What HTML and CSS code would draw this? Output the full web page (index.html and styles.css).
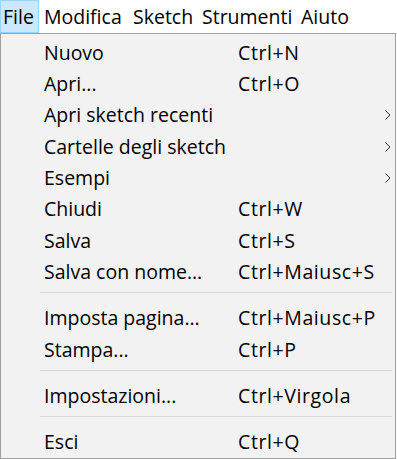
FILE: index.html
```html
<!DOCTYPE html>
<html>
<head>
<meta charset="utf-8">
<link rel="stylesheet" href="styles.css">
</head>
<body>
<div class="menubar">
  <span class="mb-item mb-file active">File</span>
  <span class="mb-item mb-edit">Modifica</span>
  <span class="mb-item mb-sketch">Sketch</span>
  <span class="mb-item mb-tools">Strumenti</span>
  <span class="mb-item mb-help">Aiuto</span>
</div>
<div class="menu">
  <div class="item"><span class="label">Nuovo</span><span class="key">Ctrl+N</span></div>
  <div class="item"><span class="label">Apri...</span><span class="key">Ctrl+O</span></div>
  <div class="item"><span class="label">Apri sketch recenti</span><span class="key"></span><svg class="arrow" width="6" height="10" viewBox="0 0 6 10"><path d="M0.5 0.5 L5 5 L0.5 9.5" fill="none" stroke="#333" stroke-width="1"/></svg></div>
  <div class="item"><span class="label">Cartelle degli sketch</span><span class="key"></span><svg class="arrow" width="6" height="10" viewBox="0 0 6 10"><path d="M0.5 0.5 L5 5 L0.5 9.5" fill="none" stroke="#333" stroke-width="1"/></svg></div>
  <div class="item"><span class="label">Esempi</span><span class="key"></span><svg class="arrow" width="6" height="10" viewBox="0 0 6 10"><path d="M0.5 0.5 L5 5 L0.5 9.5" fill="none" stroke="#333" stroke-width="1"/></svg></div>
  <div class="item"><span class="label">Chiudi</span><span class="key">Ctrl+W</span></div>
  <div class="item"><span class="label">Salva</span><span class="key">Ctrl+S</span></div>
  <div class="item"><span class="label">Salva con nome...</span><span class="key">Ctrl+Maiusc+S</span></div>
  <div class="sep"></div>
  <div class="item"><span class="label">Imposta pagina...</span><span class="key">Ctrl+Maiusc+P</span></div>
  <div class="item"><span class="label">Stampa...</span><span class="key">Ctrl+P</span></div>
  <div class="sep"></div>
  <div class="item"><span class="label">Impostazioni...</span><span class="key">Ctrl+Virgola</span></div>
  <div class="sep"></div>
  <div class="item"><span class="label">Esci</span><span class="key">Ctrl+Q</span></div>
</div>
</body>
</html>
```

FILE: styles.css
```css
html, body {
  margin: 0;
  padding: 0;
  background: #ffffff;
}
body {
  font-family: "Open Sans", "Noto Sans", sans-serif;
  font-size: 19.5px;
  color: #000;
  width: 397px;
  height: 459px;
  overflow: hidden;
}
.menubar {
  display: flex;
  height: 33px;
  align-items: stretch;
}
.mb-item {
  box-sizing: border-box;
  display: flex;
  align-items: center;
  padding: 0 0 0 4px;
  border: 1px solid transparent;
  line-height: 1;
  white-space: nowrap;
}
.mb-file { width: 39px; padding-left: 2px; }
.mb-edit { width: 89px; }
.mb-sketch { width: 69px; }
.mb-tools { width: 99px; }
.mb-help { width: 60px; }
.mb-item.active {
  background: #cce8ff;
  border-color: #99d1ff;
}
.menu {
  box-sizing: border-box;
  width: 396px;
  border: 1px solid #a0a0a0;
  background: #f2f2f2;
  padding: 3px 0 0 0;
}
.item {
  display: grid;
  grid-template-columns: 194px 1fr 10px;
  align-items: center;
  height: 31.3px;
  padding-left: 43px;
  line-height: 1;
}
.key {
  letter-spacing: 0.6px;
}
.arrow {
  display: block;
}
.sep {
  height: 1px;
  background: #d7d7d7;
  margin: 5px 3px 9px 39px;
}
```
